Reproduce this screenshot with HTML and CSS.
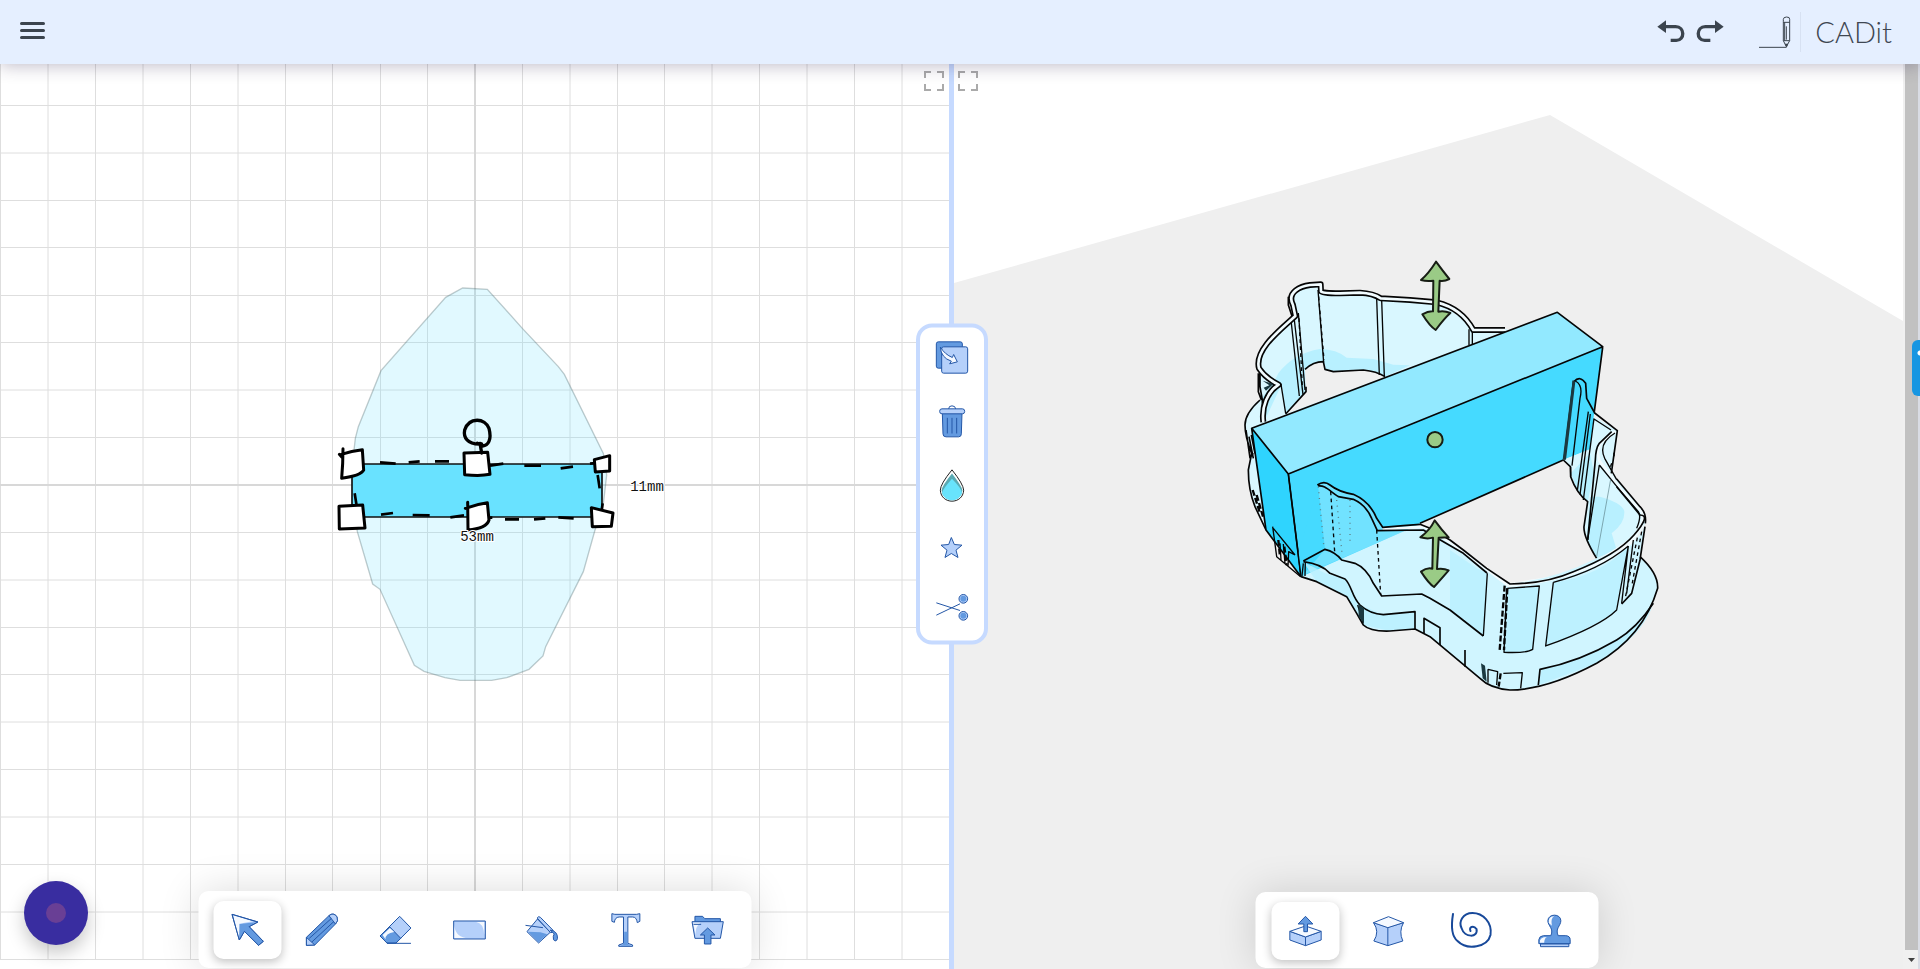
FILE: index.html
```html
<!DOCTYPE html>
<html lang="en">
<head>
<meta charset="utf-8">
<title>CADit</title>
<link rel="stylesheet" href="styles.css">
</head>
<body>
<div class="app">
<header class="header">
  <button class="plain" aria-label="Menu"><svg width="26" height="20" viewBox="0 0 26 20"><path class="burger" d="M2.500 1.500H24.500M2.500 8.500H24.500M2.500 15.500H24.500"/></svg></button>
  <div class="header-right">
    <button class="plain" aria-label="Undo"><svg width="28" height="24" viewBox="0 0 84 72"><path class="ink" d="M1 20 27 1V39Z"/><path class="curve" d="M24 20H56C84 20 84 61 58 61H41"/></svg></button>
    <button class="plain redo" aria-label="Redo"><svg width="28" height="24" viewBox="0 0 84 72"><path class="ink" d="M83 20 57 1V39Z"/><path class="curve" d="M60 20H28C0 20 0 61 26 61H43"/></svg></button>
    <a class="brand" href="#">
      <svg width="34" height="34" viewBox="0 0 102 102"><g class="logo-line"><path d="M3 97H85M76 20V13Q76 6 86 6T95 13V77L85 95 76 77ZM76 22H95M76 77H95M85 34V74M80 22V77"/></g><path class="ink" d="M80 86H91L86 98Z"/></svg>
      <span class="brand-name">CADit</span>
    </a>
  </div>
</header>
<main class="workspace">
  <section class="pane" aria-label="Sketch">
    <svg class="canvas" viewBox="0 64 949 905" preserveAspectRatio="xMidYMid slice">
      <path class="grid-line" d="M.5 64V960M48 64V960M95.500 64V960M143 64V960M190.500 64V960M238 64V960M285.500 64V960M332.500 64V960M380.500 64V960M427.500 64V960M522.500 64V960M570 64V960M617.500 64V960M664.500 64V960M712 64V960M759.500 64V960M807 64V960M854.500 64V960M902 64V960M0 105.500H949M0 153H949M0 200.500H949M0 247.500H949M0 295.500H949M0 342.500H949M0 390H949M0 437.500H949M0 532.500H949M0 580H949M0 627.500H949M0 674.500H949M0 722H949M0 769.500H949M0 817H949M0 864.500H949M0 912H949M0 959.500H949"/>
      <path class="axis" d="M475 64V960M0 485H949"/>
      <g transform="translate(320 270) scale(.33333)">
        <path class="body-shape" d="M428 54 502 58 607 175 715 290 733 313 850 550 860 615 848 720 825 780 790 905 677 1130 669 1158 627 1198 560 1223 515 1231H420L375 1223 312 1204 283 1186 180 958 158 942 112 785 97 700 102 540 106 505 115 470 183 302 377 82Z"/>
        <path class="bar-shape" d="M96 582H846V741H96Z"/>
        <path class="dash" d="M180 577 227 581M266 577 299 574M345 574H387M510 587 550 581M613 587H663M722 595 759 590M810 581 825 579M833 615 839 655M848 700 845 720M104 670 110 708M183 734 219 729M278 735 329 736M391 742 432 736M505 743 517 743M555 748H597M642 748 676 745M715 742 761 745"/>
        <g class="handle"><path d="M64 553Q95 542 127 539L131 600Q122 617 65 625Q69 580 69 536M66 562 58 553"/><path d="M432 549 503 547 510 613Q480 619 434 614Z"/><path d="M823 569 869 557V603L826 606Z"/><path d="M57 709 128 705 135 774 58 777Z"/><path d="M436 715Q470 702 502 698L507 750Q500 775 444 780L443 697"/><path d="M814 713 879 729 874 769 817 770Z"/><path class="ring" d="M485 522C440 525 430 500 434 480C448 440 495 444 507 475C516 510 504 527 488 528L472 520M480 520 485 549"/></g>
      </g>
      <text class="dim" x="477" y="541" text-anchor="middle">53mm</text>
      <text class="dim" x="647" y="491" text-anchor="middle">11mm</text>
    </svg>
    <button class="expand expand-left" aria-label="Expand sketch"><svg width="20" height="20" viewBox="0 0 20 20"><path d="M1 7V1H7M13 1H19V7M19 13V19H13M7 19H1V13"/></svg></button>
    <button class="record" aria-label="Record"><span class="record-dot"></span></button>
    <nav class="dock dock-left" aria-label="Sketch tools">
      <button class="tool active" aria-label="Select"><svg class="icon" viewBox="0 0 36 36"><g transform="scale(.3635 .3333) translate(-110 -96)"><path class="pale" d="M117 103 188 126 164 140 203 184 190 196 151 154 137 180Z"/><path class="mid edge-free" d="M137 132 181 127 164 140 203 184 190 196 151 154 137 178Z"/><path class="white" d="M120 106 173 124 137 131 136 174Z"/><path class="outline" d="M117 103 188 126 164 140 203 184 190 196 151 154 137 180Z"/></g></svg></button>
      <button class="tool" aria-label="Pencil"><svg class="icon" viewBox="0 0 36 36"><g transform="scale(.3635 .3333) translate(-313 -96)"><path class="mid" d="M321 172 383 107Q395 96 405 110Q410 123 401 132L344 195 321 196Z"/><path class="pale" d="M383 107Q395 96 405 110Q410 123 401 132ZM321 172 344 195 321 196Z"/><path class="outline" d="M329 175 390 115M336 186 397 124"/></g></svg></button>
      <button class="tool" aria-label="Eraser"><svg class="icon" viewBox="0 0 36 36"><g transform="scale(.3635 .3333) translate(-514 -96)"><path class="pale" d="M575 109 606 144 565 189H540L521 168Z"/><path class="mid" d="M548 141 578 175 565 189H540L521 168Z"/><path class="white" d="M528 165 548 144 560 156Q535 160 536 178Z"/><path class="outline" d="M540 190H606"/></g></svg></button>
      <button class="tool" aria-label="Rectangle"><svg class="icon" viewBox="0 0 36 36"><g transform="scale(.3635 .3333) translate(-718 -96)"><path class="pale" d="M724 123H811V177H724Z"/><path class="white" d="M726 126H786Q806 129 808 164V126ZM726 130Q725 168 757 174H726Z"/></g></svg></button>
      <button class="tool" aria-label="Fill"><svg class="icon" viewBox="0 0 36 36"><g transform="scale(.3635 .3333) translate(-924 -96)"><path class="pale" d="M957 117 992 157 960 189 928 155Z"/><path class="mid edge-free" d="M931 155 965 157 984 163 960 187Z"/><path class="pale" d="M956 114Q960 107 965 112L1000 151Q1000 159 993 158Z"/><path class="mid" d="M992 150Q1013 154 1012 175Q1009 188 1001 179Q999 167 1003 162Z"/><path class="outline" d="M924 136 972 143"/></g></svg></button>
      <button class="tool spaced" aria-label="Text"><svg class="icon" viewBox="0 0 36 36"><g transform="scale(.3635 .3333) translate(-1146 -96)"><path class="pale" d="M1158 101 1166 103H1226L1235 101V124L1228 128Q1226 111 1215 111H1202V190L1215 195V199H1177V195L1190 190V111H1178Q1166 112 1165 127L1158 124Z"/><path class="mid edge-free" d="M1192 155H1201V191L1210 197H1182L1191 191Z"/></g></svg></button>
      <button class="tool spaced" aria-label="Import"><svg class="icon" viewBox="0 0 36 36"><g transform="scale(.3635 .3333) translate(-1375 -96)"><path class="mid" d="M1390 127V109H1411L1417 116H1460V127Z"/><path class="pale" d="M1382 125H1468L1460 175H1390Z"/><path class="white" d="M1385 128H1405Q1390 140 1392 165Z"/><path class="mid" d="M1425 144 1445 165H1434V192H1416V165H1405Z"/><path class="outline" d="M1386 133H1407"/></g></svg></button>
    </nav>
  </section>
  <div class="divider">
    <nav class="context" aria-label="Selection tools">
      <button class="plain tall" aria-label="Duplicate"><svg class="icon" viewBox="0 0 36 36"><g transform="scale(.33333) translate(-102 -93)"><rect class="mid" x="109" y="100" width="78" height="79" rx="6"/><rect class="pale" x="125" y="115" width="78" height="79" rx="6"/><path class="white edge" d="M121 116Q135 138 157 147L161 138 172 160 149 166 154 158Q123 148 121 116Z"/></g></svg></button>
      <button class="plain tall" aria-label="Delete"><svg class="icon" viewBox="0 0 36 36"><g transform="scale(.33333) translate(-102 -288)"><path class="mid" d="M127 317H186L184 379Q184 388 176 388H138Q129 388 129 379Z"/><rect class="pale" x="119" y="304" width="75" height="15" rx="7"/><path class="outline" d="M146 304Q146 295 156 295T167 304M142 331V378M156 331V378M170 331V378"/></g></svg></button>
      <button class="plain tall" aria-label="Color"><svg class="icon" viewBox="0 0 36 36"><g transform="scale(.33333) translate(-102 -480)"><path class="drop" d="M156 487Q190 530 191 548C189 592 123 592 121 548Q121 530 156 487Z"/><path class="drop-back" d="M156 498Q185 535 187 548C185 586 127 586 125 548Q126 535 156 498Z"/><path class="drop-front" d="M156 514Q186 545 186 556C178 586 134 586 126 556Q128 545 156 514Z"/></g></svg></button>
      <button class="plain" aria-label="Favourite"><svg class="icon" viewBox="0 0 36 36"><g transform="scale(.33333) translate(-102 -662)"><path class="pale" d="M154 686 163 707 186 709 168 724 174 746 154 734 135 746 141 724 123 709 146 707Z"/></g></svg></button>
      <button class="plain" aria-label="Cut"><svg class="icon" viewBox="0 0 36 36"><g transform="scale(.33333) translate(-102 -843)"><path class="outline" d="M109 883 180 906M109 920 180 886"/><circle class="pale" cx="190" cy="871" r="13"/><circle class="mid edge-free" cx="190" cy="871" r="9"/><circle class="pale" cx="190" cy="922" r="13"/><circle class="mid edge-free" cx="190" cy="922" r="9"/></g></svg></button>
    </nav>
  </div>
  <section class="pane" aria-label="Model">
    <svg class="canvas" viewBox="954 64 949 905" preserveAspectRatio="xMidYMid slice">
      <path class="floor" d="M954 283 1550 115 1903 321V969H954Z"/>
      <g class="model" transform="translate(1230 240) scale(.33333)">
        <!-- rear wall and inner opening -->
        <path class="wall" d="M108 870Q100 840 75 800Q55 750 55 690L65 640Q45 600 45 550Q55 500 90 480L90 405 78 370Q85 320 183 235L190 210 175 175Q180 145 245 130L278 128 280 153 330 158 390 153 440 165 460 178 540 178 650 190Q710 215 735 265L835 268 725 315 65 565Z"/>
        <path class="tint" d="M145 400Q190 340 270 327Q320 328 350 353L430 357 490 374 540 376 465 410 400 390 310 395 285 390 280 365 225 388 228 455 167 522 155 433 105 540 92 478 130 430Z"/>
        <path class="floor" d="M225 388Q250 365 280 365L285 390 310 395 400 390Q445 392 465 410L167 522 228 455Z"/>
        <path class="line" d="M90 480Q45 520 45 555T65 640L55 690Q55 750 75 800L108 870M225 388Q250 365 280 365L285 388 310 395 400 390Q440 394 465 410M228 440V455L167 522M175 170V195L188 235M90 400V440L97 480 98 545M85 400V455L94 480M57 590 70 655M48 570 60 654 70 640M64 585 75 640"/>
        <path class="line fine" d="M183 240 208 468M193 240 219 464M205 219 225 450M264 150 281 367M440 175 448 405M455 180 463 409M717 268V315M727 272V312M727 275H810M104 515Q108 460 153 433L167 520"/>
        <path class="coping-edge" d="M100 546C94 500 112 455 146 434Q106 414 87 385C72 330 150 270 196 228L189 195C168 155 215 138 240 135L272 133 273 154Q276 160 330 160L390 158Q430 160 452 175L540 180 620 187Q695 205 730 270H825"/>
        <path class="coping" d="M100 546C94 500 112 455 146 434Q106 414 87 385C72 330 150 270 196 228L189 195C168 155 215 138 240 135L272 133 273 154Q276 160 330 160L390 158Q430 160 452 175L540 180 620 187Q695 205 730 270H825"/>
        <path class="line dashes" d="M266 170 282 360M207 235 217 440"/>
        <path class="dark" d="M98 422 130 432 108 452 101 443 118 436Z"/>
        <!-- solid block -->
        <path class="block-top" d="M65 565 175 702 1118 320 982 217Z"/>
        <path class="block-left" d="M65 565 175 702 213 1010 108 870Z"/>
        <path class="block-front" d="M175 702 1118 320 1093 515 1080 628 1000 660 570 850 213 1010Z"/>
        <path class="line" d="M65 565 982 217 1118 320 175 702ZM1118 322 1093 515M1000 660 570 850M65 565 108 870 213 1010M175 702 213 1010"/>
        <!-- right wall -->
        <path class="wall" d="M998 660 1080 628 1092 530 1110 540 1162 572 1145 700 1230 800Q1250 820 1246 850L1215 900 1100 955 1075 915 1062 860 1073 785 1040 750 1022 680Z"/>
        <path class="tint" d="M1110 770Q1180 790 1183 815Q1185 850 1145 880L1160 930 1100 955 1070 900 1080 770ZM1022 700 1080 640 1092 700 1073 785 1042 752Z"/>
        <path class="coping" d="M1156 574 1120 601Q1096 622 1108 662L1170 745 1235 815Q1250 850 1200 900Q1060 1005 900 1023L835 1035"/>
        <path class="line" d="M1032 425Q1050 405 1067 430L1070 475 1094 519 1162 572 1144 700M1145 575 1108 610Q1097 625 1096 660L1073 900M1160 717 1230 800Q1250 820 1246 850M1000 660 1021 680 1022 710Q1040 760 1073 785L1062 860Q1060 890 1100 955"/>
        <path class="line fine" d="M1030 423 1002 659M1036 423Q1060 435 1050 475L1026 677M1022 680V710M1075 515 1042 752M1081 522 1050 764M1092 535 1060 780M1092 537 1143 570M1108 675 1073 900M1155 579C1120 600 1110 625 1124 655L1160 719M1108 675 1165 745 1225 815Q1235 830 1220 865"/>
        <path class="dark" d="M1028 420 1036 425 1008 659 998 659Z"/>
        <path class="line soft" d="M1142 718 1100 950"/>
        <path class="line dashes" d="M1152 638V658M1145 670 1140 685"/>
        <!-- front base and wall -->
        <path class="wall front" d="M213 1010 260 1025 320 1055 350 1070 380 1120 400 1155Q420 1175 480 1173L555 1167 600 1190 750 1315Q780 1345 840 1350Q950 1350 1100 1270Q1240 1190 1283 1045Q1285 1000 1230 950L1245 850Q1235 920 1100 955Q970 1020 840 1031L655 905 600 860 458 864 220 965Z"/>
        <path class="block-front" d="M213 1010 205 940 264 738 458 864 570 852Z"/>
        <path class="glass" d="M264 735 292 730 330 755 370 763 410 790 458 864 570 853 220 1005 285 928Z"/>
        <path class="tint thin" d="M220 965 285 1000 345 1017 390 1095 460 1124 555 1115 555 1167 480 1173 400 1155 350 1070 260 1025ZM970 1027Q1110 1010 1195 918L1160 1110Q1100 1160 947 1218ZM935 1288Q1190 1230 1270 1090Q1240 1190 1100 1270L925 1335ZM832 1045 928 1038 908 1228Q890 1240 822 1237ZM740 985 772 1000 760 1188 660 1110V930Z"/>
        <path class="coping" d="M458 868 580 860 605 870 700 935 835 1037Q1060 1020 1200 912L1238 855"/>
        <path class="line" d="M213 1010 260 1025 320 1055 350 1070 380 1120 400 1155Q420 1175 480 1173L555 1167 600 1190 750 1315Q780 1345 840 1350Q950 1350 1100 1270Q1240 1190 1283 1045Q1285 1000 1230 950M262 735C278 724 290 727 300 735S335 757 370 763Q420 785 440 835L458 862 520 857 570 853 600 865 660 900 700 930 770 985 840 1032Q950 1030 1030 995Q1160 945 1212 885T1230 825L1160 740M264 738C285 735 295 750 325 770L370 778Q408 795 425 835L442 872 580 870 600 882 700 940 771 999"/>
        <path class="line" d="M1245 860 1230 960 1205 1060 1175 1092M220 963 285 928Q315 935 335 960L375 970Q410 985 430 1030L455 1068 575 1062 600 1075 660 1110 760 1188M220 965Q275 972 300 1000L345 1017C365 1035 365 1070 390 1095Q420 1122 460 1124L555 1115V1167M582 1180V1135L630 1163V1215M1270 1090Q1220 1165 1160 1200Q1050 1265 930 1288L925 1335M705 1230V1280"/>
        <path class="line fine" d="M772 1000 760 1188M832 1045 928 1038 908 1228Q890 1240 822 1237L830 1045M970 1027 947 1218Q1110 1160 1160 1110L1195 918M970 1027Q1110 990 1195 918M1210 900 1190 1060M1195 918 1175 1090M820 1300 877 1298 872 1345M130 865 195 945M128 860 140 950 212 1010M220 970 216 1008M226 966 225 1008M383 1095 400 1150M150 910 153 960M160 912 165 970M174 980 176 935 195 945"/>
        <path class="line heavy-dashes" d="M824 1037 809 1230M832 1045 822 1230M812 1300 806 1340M145 900 150 950M163 920 170 975M68 750 90 820M80 765 99 830"/>
        <path class="line dashes" d="M440 870 452 1064M302 755 314 935M1222 893 1185 1078M1235 875 1205 1040"/>
        <path class="line soft dashes" d="M265 740 282 925M320 780 336 940M360 780V910"/>
        <path class="dark" d="M385 1092 402 1105V1150L386 1130ZM753 1270 765 1277 770 1325 758 1315Z"/>
        <path class="line fine" d="M774 1288 803 1295 800 1335M774 1288V1328M175 702 213 1010"/>
      </g>
      <g class="gizmo" transform="translate(1230 240) scale(.33333)"><path d="M618 65Q640 95 658 117Q642 125 629 122L625 215Q642 211 661 219Q643 235 617 270Q600 260 577 223Q595 213 609 214L610 122Q590 125 573 120Q596 100 618 65Z"/><path d="M614 841Q635 870 656 892L626 893 621 987Q640 984 656 991Q638 1012 612 1041Q597 1032 573 995Q590 982 607 986L609 893Q592 898 571 892Q600 870 614 841Z"/><circle cx="615" cy="599" r="23"/></g>
    </svg>
    <button class="expand expand-right" aria-label="Expand model"><svg width="20" height="20" viewBox="0 0 20 20"><path d="M1 7V1H7M13 1H19V7M19 13V19H13M7 19H1V13"/></svg></button>
    <nav class="dock dock-right" aria-label="Model tools">
      <button class="tool active" aria-label="Extrude"><svg class="icon" viewBox="0 0 36 36"><g transform="scale(.33333) translate(-141 -99)"><path class="pale" d="M148 154 195 171 242 154V180L195 197 148 180Z"/><path class="white edge" d="M148 154 195 138 242 154 195 171Z"/><path class="outline" d="M195 171V197"/><path class="mid" d="M195 109 217 132H201V155H190V132H173Z"/></g></svg></button>
      <button class="tool" aria-label="Deform"><svg class="icon" viewBox="0 0 36 36"><g transform="scale(.33333) translate(-391 -99)"><path class="pale" d="M400 128 443 142 490 128Q475 155 488 183L443 197 401 183Q419 155 400 128Z"/><path class="white edge" d="M400 128 445 110 490 128 443 143Z"/><path class="outline" d="M443 143V197"/></g></svg></button>
      <button class="tool" aria-label="Spiral"><svg class="icon wide" viewBox="0 0 42 42"><path class="spiral" d="M2.500 4C0 19 2 27 7 31C17 41 37 37 40 25C42 12 32 3 22 3C12 3 8 12 11 18C14 28 28 28 26 19C23 15 18 17 20 21"/></svg></button>
      <button class="tool" aria-label="Stamp"><svg class="icon" viewBox="0 0 36 36"><g transform="scale(.33333) translate(-888 -99)"><path class="mid" d="M931 167C941 145 922 138 922 122C923 100 961 100 961 122C961 138 943 145 953 167H976Q989 168 989 179V191H895V179Q896 168 909 167Z"/><path class="white" d="M925 129Q923 108 941 109Q930 114 934 137ZM898 188Q896 171 920 171Q912 173 911 188Z"/><path class="pale" d="M900 192H985V200H900Z"/></g></svg></button>
    </nav>
  </section>
  <div class="gutter"></div>
  <div class="scrollbar"><div class="scroll-thumb"></div><svg width="13" height="19" viewBox="0 0 13 19"><path class="scroll-arrow" d="M3 8H10L6.500 12Z"/></svg></div>
  <div class="edge-strip"></div>
  <button class="side-tab" aria-label="Feedback"></button>
</main>
</div>
</body>
</html>
```
FILE: styles.css
```css
* { box-sizing: border-box; }
body { margin: 0; font-family: Lato, "Liberation Sans", sans-serif; background: #fff; color: #3f4752; }
button { font: inherit; padding: 0; border: 0; background: none; cursor: pointer; }
svg { display: block; }
.app { display: flex; flex-direction: column; height: 100vh; overflow: hidden; }
.header { position: relative; z-index: 3; flex: none; height: 64px; padding: 0 28px 0 19px; display: flex; align-items: center; justify-content: space-between; background: #e5efff; box-shadow: 0 2px 16px rgba(50, 35, 80, .3); }
.header-right, .brand { display: flex; align-items: center; }
.plain { display: flex; align-items: center; justify-content: center; }
.redo { margin: 0 34px 0 11px; }
.brand { color: #3f4752; text-decoration: none; }
.brand-name { margin-left: 8px; padding-left: 14px; border-left: 1px solid #d7e1f2; font-size: 29px; line-height: 40px; font-weight: 300; }
.burger { stroke: #3b444e; stroke-width: 3; stroke-linecap: round; }
.ink { fill: #3b444e; }
.curve { fill: none; stroke: #3b444e; stroke-width: 10; }
.logo-line { fill: none; stroke: #3b444e; stroke-width: 3; }

.workspace { position: relative; flex: 1; min-height: 0; display: grid; grid-template-columns: 1fr 5px 1fr 2px 13px 2px; grid-template-rows: 100%; }
.pane { position: relative; min-width: 0; overflow: hidden; background: #fff; }
.canvas { width: 100%; height: 100%; }
.divider { position: relative; z-index: 2; background: #c6daff; }
.gutter { background: #f0f0f0; }
.scrollbar { display: flex; flex-direction: column; background: #f0f0f0; }
.scroll-thumb { flex: 1; background: #c1c1c1; }
.scroll-arrow { fill: #404040; }
.edge-strip { background: #d9dce4; }
.side-tab { position: absolute; right: 0; top: 276px; width: 8px; height: 56px; border-radius: 6px 0 0 6px; background: radial-gradient(circle at 100% 13px, #fff 2px, #1796e2 3px); }

.grid-line { fill: none; stroke: #dedede; stroke-width: 1; }
.axis { fill: none; stroke: #d8d8d8; stroke-width: 2; }
.body-shape { fill: rgba(90, 220, 255, .18); stroke: rgba(80, 105, 110, .35); stroke-width: 4; }
.bar-shape { fill: #69e2ff; stroke: #111; stroke-width: 5; }
.dash { fill: none; stroke: #000; stroke-width: 8; }
.handle { fill: #fff; stroke: #000; stroke-width: 9; stroke-linejoin: round; stroke-linecap: round; }
.ring { fill: none; stroke-width: 10; }
.dim { font: 14px "Liberation Mono", monospace; fill: #111; stroke: #fff; stroke-width: 2; paint-order: stroke; }

.expand { position: absolute; top: 7px; }
.expand-left { right: 5px; }
.expand-right { left: 4px; }
.expand path { fill: none; stroke: #aaa; stroke-width: 2; }
.record { position: absolute; left: 24px; bottom: 24px; width: 64px; height: 64px; border-radius: 50%; display: grid; place-items: center; background: #392da0; box-shadow: 0 8px 18px rgba(0, 0, 0, .22); }
.record-dot { width: 20px; height: 20px; border-radius: 50%; background: #693f95; }

.dock { position: absolute; bottom: 1px; left: 50%; transform: translateX(-50%); display: flex; border-radius: 10px; background: #fff; box-shadow: 0 0 40px rgba(0, 0, 0, .14); }
.dock-left { gap: 6px; padding: 10px 10px 9px 15px; }
.dock-right { gap: 15px; margin-left: -2px; padding: 10px 10px 8px 16px; }
.tool { flex: none; width: 68px; height: 58px; display: grid; place-items: center; border-radius: 10px; }
.spaced { margin-left: 8px; }
.active { background: #fff; box-shadow: 0 3px 10px rgba(0, 0, 0, .24); }
.icon { width: 36px; height: 36px; overflow: visible; }
.wide { width: 42px; height: 42px; }
.icon path, .icon rect, .icon circle { vector-effect: non-scaling-stroke; }
.pale { fill: #b5d0fa; stroke: #2457a7; stroke-width: 1; }
.mid { fill: #639ae0; stroke: #2457a7; stroke-width: 1; }
.white { fill: #f5f9ff; }
.edge { stroke: #2457a7; stroke-width: 1; }
.edge-free { stroke: none; }
.outline { fill: none; stroke: #2457a7; stroke-width: 1; }
.spiral { fill: none; stroke: #18499a; stroke-width: 2; stroke-linecap: round; }
.drop { fill: #fff; stroke: #222; stroke-width: 1; }
.drop-back { fill: #5aaab3; }
.drop-front { fill: #68e3fc; }

.context { position: absolute; top: 50%; left: 50%; transform: translate(-50%, -50%); width: 72px; margin-top: -33px; display: flex; flex-direction: column; align-items: center; gap: 24px; padding: 10px 0 15px; border: 4px solid #c6daff; border-radius: 16px; background: #fff; }
.tall { height: 40px; }

.floor { fill: #efefef; }
.wall { fill: #d9f7ff; }
.front { fill: #d0f5ff; }
.tint { fill: #b8f0ff; }
.thin { opacity: .8; }
.glass { fill: #9deaff; opacity: .5; }
.block-top { fill: #92e9ff; }
.block-left { fill: #2fd4fe; }
.block-front { fill: #45daff; }
.coping { fill: none; stroke: #f2fcff; stroke-width: 8; stroke-linejoin: round; }
.coping-edge { fill: none; stroke: #050505; stroke-width: 18; stroke-linejoin: round; }
.line { fill: none; stroke: #050505; stroke-width: 5; stroke-linejoin: round; }
.fine { stroke-width: 4; }
.soft { stroke: #5c8188; stroke-width: 2; }
.dashes { stroke-dasharray: 11 10; stroke-width: 4; }
.soft.dashes { stroke-dasharray: 3 14; }
.heavy-dashes { stroke-width: 7; stroke-dasharray: 18 7; }
.dark { fill: #1b3940; }
.gizmo { fill: #9acb86; stroke: #171d14; stroke-width: 6; stroke-linejoin: round; }
```
